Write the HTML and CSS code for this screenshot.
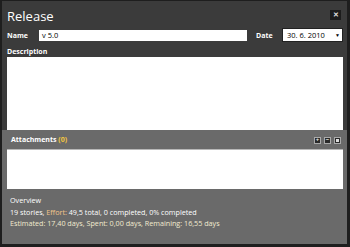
FILE: index.html
```html
<!DOCTYPE html>
<html lang="en">
<head>
  <meta charset="UTF-8" />
  <title>Release</title>
  <link rel="stylesheet" href="styles.css">
</head>
<body>
  <div class="dialog">
    <div class="top">
      <div class="title-bar">
        <h1>Release</h1>
        <button class="close">&#x2715;</button>
      </div>

      <div class="fields">
        <label class="lbl">Name</label>
        <div class="input">v 5.0</div>
        <label class="lbl">Date</label>
        <div class="select">30. 6. 2010<span class="caret">&#9660;</span></div>
      </div>

      <label class="lbl desc-lbl">Description</label>
      <div class="textarea"></div>
    </div>

    <div class="bottom">
      <div class="att-head">
        <span class="lbl">Attachments <span class="count">(0)</span></span>
        <div class="tools">
          <span class="tool">+</span>
          <span class="tool">&#8722;</span>
          <span class="tool"><span class="sq"></span></span>
        </div>
      </div>
      <div class="att-box"></div>

      <div class="overview">
        <div>Overview</div>
        <div>19 stories, <span class="hl">Effort:</span> 49,5 total, 0 completed, 0% completed</div>
        <div class="est">Estimated: 17,40 days, Spent: 0,00 days, Remaining: 16,55 days</div>
      </div>
    </div>
  </div>
</body>
</html>
```

FILE: styles.css
```css
body {
  margin: 0;
  background: #6a6a6a;
  font-family: 'Open Sans', 'Noto Sans', sans-serif;
  color: #fff;
}

.dialog {
  width: 350px;
  height: 247px;
  box-sizing: border-box;
  border: 1px solid #1e1e1e;
  border-left-width: 2px;
  border-right-width: 3px;
  border-bottom-width: 3px;
  display: flex;
  flex-direction: column;
  background: #6a6a6a;
}

.top {
  background: #3b3b3b;
  padding: 0 4px 0 5px;
}

.title-bar {
  height: 26px;
  display: flex;
  align-items: center;
  justify-content: space-between;
}

h1 {
  margin: 0;
  font-size: 13px;
  font-weight: normal;
  line-height: 16px;
  padding-top: 3px;
}

.close {
  width: 11px;
  height: 10px;
  padding: 0;
  margin: 2px 2px 0 0;
  border: none;
  background: #1c1c1c;
  color: #ddd;
  font-size: 7px;
  line-height: 10px;
  font-weight: bold;
}

.lbl {
  font-size: 7px;
  font-weight: bold;
  color: #fff;
}

.fields {
  display: flex;
  align-items: center;
  height: 16px;
}

.fields .lbl {
  width: 32px;
}

.input {
  width: 208px;
  height: 11px;
  background: #fff;
  color: #000;
  font-size: 7.5px;
  line-height: 11px;
  padding-left: 3px;
  box-sizing: border-box;
  margin-right: 9px;
}

.fields .lbl + .select {
  margin-left: -6px;
}

.select {
  width: 61px;
  height: 14px;
  box-sizing: border-box;
  border: 1px solid #222;
  background: #fff;
  color: #000;
  font-size: 7.5px;
  line-height: 12px;
  padding-left: 4px;
  display: flex;
  justify-content: space-between;
}

.caret {
  font-size: 5px;
  padding-right: 2px;
}

.desc-lbl {
  display: block;
  height: 14px;
  line-height: 17px;
}

.textarea {
  height: 73px;
  background: #fff;
}

.bottom {
  flex: 1;
  padding: 0 4px 0 5px;
}

.att-head {
  height: 19px;
  display: flex;
  align-items: center;
  justify-content: space-between;
  padding-left: 4px;
  border-bottom: 1px solid #b8b8b8;
}

.count {
  color: #f3c640;
}

.tools {
  display: flex;
  gap: 3px;
  margin-right: 2px;
  margin-top: 2px;
}

.tool {
  width: 7px;
  height: 7px;
  box-sizing: border-box;
  border: 1px solid #aaa;
  background: #2a2a2a;
  color: #eee;
  font-size: 6px;
  line-height: 5px;
  display: flex;
  align-items: center;
  justify-content: center;
  font-weight: bold;
}

.sq {
  width: 3px;
  height: 3px;
  background: #ddd;
}

.att-box {
  height: 39px;
  background: #fff;
}

.overview {
  padding: 6px 0 0 3px;
  font-size: 7.2px;
  line-height: 11.5px;
}

.hl {
  color: #f4c58a;
}

.est {
  color: #f2ead0;
}
```
